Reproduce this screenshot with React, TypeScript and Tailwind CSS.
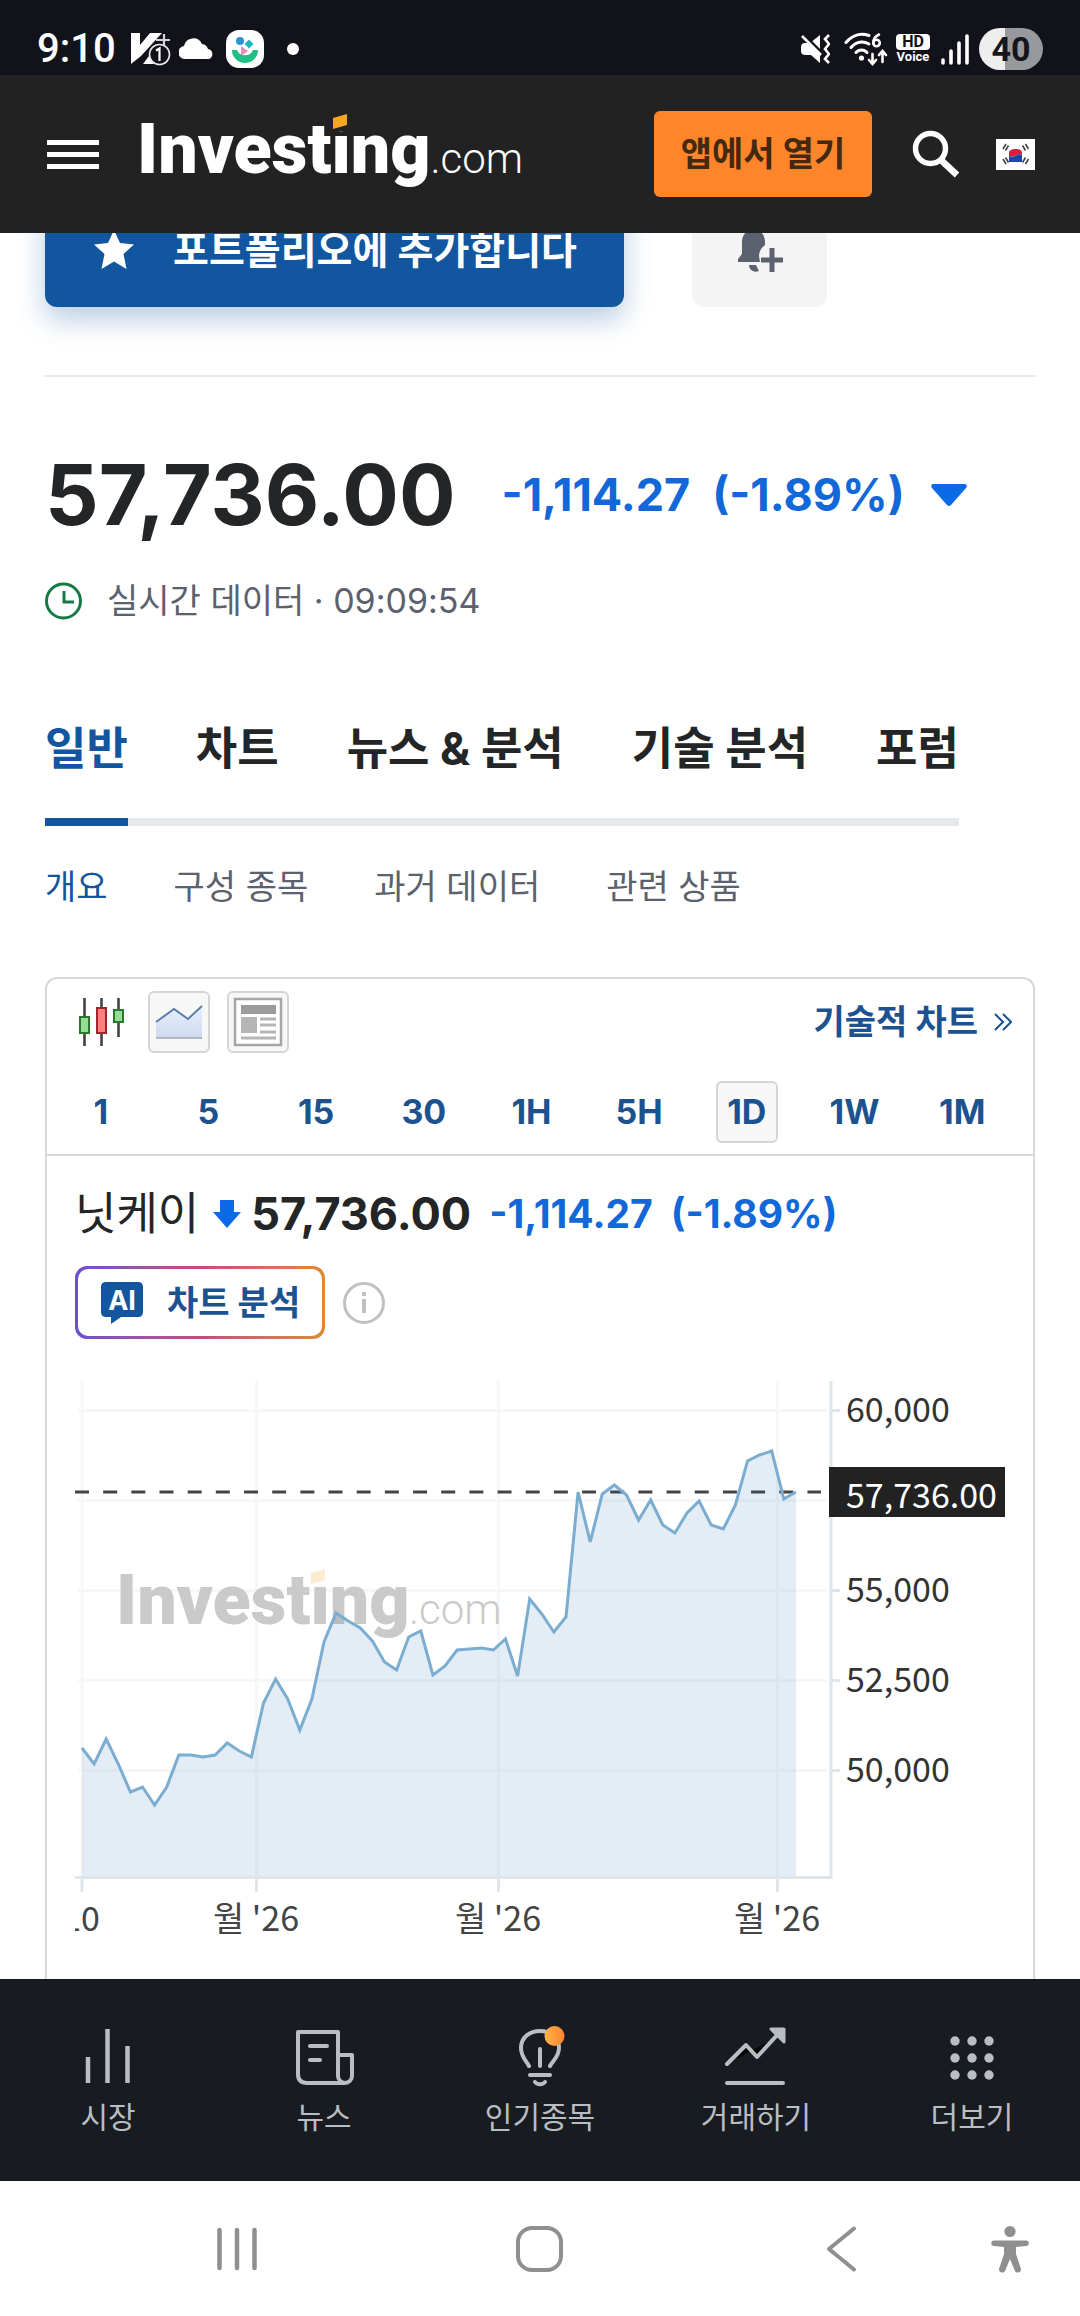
import React from "react";

const KR = "font-['Inter','Noto_Sans_CJK_KR',sans-serif]";

const timeframes = ["1", "5", "15", "30", "1H", "5H", "1D", "1W", "1M"];
const tabs = ["일반", "차트", "뉴스 & 분석", "기술 분석", "포럼"];
const subTabs = ["개요", "구성 종목", "과거 데이터", "관련 상품"];

/* Heights of the daily closes inside the plot area, one per trading day. */
const closes = [
  367, 383, 358, 383, 411, 406, 424, 406, 374, 374, 376, 374, 362, 370, 376, 322, 298, 318, 349, 318,
  261, 232, 240, 247, 260, 281, 289, 256, 250, 294, 285, 269, 268, 267, 269, 258, 295, 218, 233, 251,
  236, 111, 161, 113, 104, 114, 139, 119, 144, 152, 132, 120, 144, 148, 124, 80, 74, 70, 118, 111,
];
const STEP = 12.1;
const line = closes.map((y, i) => `${(7 + i * STEP).toFixed(1)},${y}`).join(" ");
const endX = (7 + (closes.length - 1) * STEP).toFixed(1);

function StatusBar() {
  return (
    <div className="flex h-[75px] items-center justify-between bg-[#12131a] pr-[37px] pl-[37px] pb-2.5 pt-8 font-['Roboto',sans-serif] text-white">
      <div className="flex items-center">
        <span className="w-[78px] text-[40px] leading-8 font-medium">9:10</span>
        <svg className="ml-4 h-9 w-10" viewBox="0 0 40 36" aria-hidden="true">
          <path d="M0 2h9v12L19 2h12L10 25l-10 8z" fill="#fff" />
          <path d="M12 33l9-12h7v12z" fill="#fff" />
          <path d="M25 9h14M33 3v12" stroke="#d4d4d8" strokeWidth="2.200" />
          <circle cx="28.500" cy="23.500" r="10" fill="#12131a" stroke="#e8e8ea" strokeWidth="1.600" />
          <path d="M25 19.500l3.500-2V30" fill="none" stroke="#fff" strokeWidth="2.200" />
        </svg>
        <svg className="ml-2 h-6 w-[36px]" viewBox="0 0 36 24" aria-hidden="true">
          <path d="M7 22a6.500 6.500 0 0 1-2-13A9.500 9.500 0 0 1 23 7a7 7 0 0 1 6 5 5.200 5.200 0 0 1 1 10z" fill="#fff" />
        </svg>
        <svg className="ml-2.5 h-10 w-10" viewBox="0 0 40 40" aria-hidden="true">
          <rect x="1" y="1" width="38" height="38" rx="13" fill="#fff" />
          <circle cx="15" cy="12" r="4" fill="#2a93d8" />
          <path d="M24 10.500l4.500 4.500-4.500 4.500-4.500-4.500z" fill="#1cb8bd" />
          <path d="M16 17l7 5-7 5z" fill="#e58fc0" />
          <path d="M7 21h5a8.500 8 0 0 0 16 0h5a13 13 0 0 1-26 0z" fill="#1fbf85" />
        </svg>
        <span className="ml-[22px] h-3 w-3 rounded-full bg-white" />
      </div>
      <div className="flex items-center">
        <svg className="h-8 w-[30px]" viewBox="0 0 30 32" aria-hidden="true">
          <path d="M20 2v28l-9-8H6c-3 0-5-1-5-4v-4c0-2 1-4 4-4h5z" fill="#fff" />
          <path d="M2 0l22 22" stroke="#12131a" strokeWidth="3" />
          <path d="M2 3l19 19" stroke="#fff" strokeWidth="2.500" />
          <path d="M29 2l-4 4 4 5-4 5 4 5-4 5 4 4" fill="none" stroke="#fff" strokeWidth="2.600" />
        </svg>
        <svg className="ml-3.5 h-[34px] w-[45px]" viewBox="0 0 45 34" aria-hidden="true">
          <g fill="none" stroke="#fff" strokeWidth="3" strokeLinecap="round">
            <path d="M2 10.500C9 2 18 1 25 3.500" />
            <path d="M7 15.500c5-6 12-7 18-3.500" />
            <path d="M12 20.500c3-3.500 8-3.500 11 0" />
            <path d="M28.500 22v9M25 28l3.500 4 3.500-4M38.500 30V20M35 23l3.500-4 3.500 4" strokeWidth="2.600" />
            <path d="M35 2.500c-4 2-6 5-5.500 8.500" strokeWidth="2.600" />
            <circle cx="32.500" cy="11" r="3.300" strokeWidth="2.600" />
          </g>
          <circle cx="17.500" cy="26" r="2.600" fill="#fff" />
        </svg>
        <div className="ml-1.5 flex w-9 flex-col items-center">
          <span className="flex h-4 w-[34px] items-center justify-center rounded-[4px] bg-white text-[16px] leading-4 font-bold text-[#12131a]">
            HD
          </span>
          <span className="text-[13px] leading-[14px] font-bold">Voice</span>
        </div>
        <svg className="ml-2.5 h-8 w-7" viewBox="0 0 28 32" aria-hidden="true">
          <path d="M2 27v3M10 18v12M18 10v20M26 3v27" stroke="#fff" strokeWidth="3.600" strokeLinecap="round" />
        </svg>
        <span className="ml-2.5 flex h-[42px] w-16 items-center justify-center rounded-full bg-linear-to-r from-[#eeeeee] from-40% to-[#98999c] to-40% text-[34px] leading-8 font-bold text-[#15161c]">
          40
        </span>
      </div>
    </div>
  );
}

function Header() {
  return (
    <header className="flex h-[158px] items-center bg-[#222222] pr-[45px] pl-[47px]">
      <button type="button" aria-label="메뉴" className="flex w-[52px] flex-col gap-[7px]">
        <span className="h-[5px] w-full bg-white" />
        <span className="h-[5px] w-full bg-white" />
        <span className="h-[5px] w-full bg-white" />
      </button>
      <a href="#" aria-label="Investing.com" className="relative ml-[38px] block font-['Roboto',sans-serif] whitespace-nowrap text-white">
        <span className="text-[70px] leading-[74px] font-black">Investing</span>
        <span className="text-[42px] leading-[74px] font-light">.com</span>
        <svg className="absolute top-0 left-[194px] h-5 w-[18px]" viewBox="0 0 18 20" aria-hidden="true">
          <path d="M0 0h18v19H0z" fill="#222222" />
          <path d="M2 6l14-4v11L2 17z" fill="#f5a623" />
        </svg>
      </a>
      <button type="button" className="ml-auto h-[86px] w-[218px] rounded-md bg-[#ff852b] text-[34px] leading-10 font-bold text-[#43290f]">
        앱에서 열기
      </button>
      <button type="button" aria-label="검색" className="ml-10">
        <svg className="h-12 w-12" viewBox="0 0 48 48" aria-hidden="true">
          <circle cx="18.500" cy="18.500" r="15" fill="none" stroke="#fff" strokeWidth="5.500" />
          <path d="M30 31l15 14" stroke="#fff" strokeWidth="6.500" />
        </svg>
      </button>
      <button type="button" aria-label="한국어" className="ml-9">
        <svg className="h-[31px] w-[39px]" viewBox="0 0 39 31" aria-hidden="true">
          <rect width="39" height="31" fill="#fff" />
          <path d="M13 17v-3c0-3 3-4 6.500-4s6.500 1 6.500 4v2c-3-2-5 0-7 1s-4 1-6 0z" fill="#d3213c" />
          <path d="M13 17c2 1 4 1 6 0s4-3 7-1v7H13z" fill="#1a46a8" />
          <path d="M7 10l3-5M9.500 11.500l3-5M26.500 6.500l3 5M29.500 5l3 5M7 20l3 5M9.500 18.500l3 5M26.500 23.500l3-5M29.500 25l3-5" stroke="#444" strokeWidth="1.600" />
        </svg>
      </button>
    </header>
  );
}

function Actions() {
  return (
    <div className="-mt-10 flex gap-[68px] border-b-2 border-[#e6e9eb] pb-[68px]">
      <button type="button" className="flex h-[114px] w-[579px] items-center rounded-xl bg-[#1256a0] pl-12 text-[39px] leading-[46px] font-bold text-white shadow-[0_12px_28px_rgba(18,86,160,0.3)]">
        <svg className="h-[42px] w-[42px]" viewBox="0 0 42 42" aria-hidden="true">
          <path d="M21 1l6 13 14 1.500-10.500 9.500L33.500 40 21 32.500 8.500 40l3-15L1 15.500 15 14z" fill="#fff" />
        </svg>
        <span className="ml-[38px]">포트폴리오에 추가합니다</span>
      </button>
      <button type="button" aria-label="알림 추가" className="flex h-[114px] w-[135px] items-center justify-center rounded-xl bg-[#f4f4f4]">
        <svg className="h-12 w-12" viewBox="0 0 48 48" aria-hidden="true">
          <path d="M18 1a3 3 0 0 1 3 3c5 1.500 8 6 8 12v3c-4 3-6 7-6 11l1 6H2v-3l4-5V16C6 10 9 5.500 15 4a3 3 0 0 1 3-3z" fill="#5b616e" />
          <path d="M13 39h7l3 6c-5 2-10-1-10-6z" fill="#5b616e" />
          <path d="M36 22v24M25 34h22" stroke="#5b616e" strokeWidth="5" />
        </svg>
      </button>
    </div>
  );
}

function Quote() {
  return (
    <section className="pt-[58px]">
      <div className="flex items-center">
        <span className="text-[84px] leading-[120px] font-bold text-[#232526]">57,736.00</span>
        <span className="ml-[46px] text-[45px] leading-[54px] font-bold text-[#1268d8]">-1,114.27</span>
        <span className="ml-[22px] text-[45px] leading-[54px] font-bold text-[#1268d8]">(-1.89%)</span>
        <svg className="ml-[26px] h-[22px] w-9" viewBox="0 0 36 22" aria-hidden="true">
          <path d="M2 0h32q3 1 1 4L20 21q-2 2-4 0L1 4Q-1 1 2 0z" fill="#0b6ae6" />
        </svg>
      </div>
      <div className="mt-[21px] flex items-center text-[34px] leading-[50px] text-[#5b616e]">
        <svg className="h-[38px] w-[38px]" viewBox="0 0 38 38" fill="none" stroke="#177a45" strokeWidth="3" aria-hidden="true">
          <circle cx="18.500" cy="19" r="17" />
          <path d="M19 9v11h10" />
        </svg>
        <span className="ml-6">실시간 데이터 · 09:09:54</span>
      </div>
    </section>
  );
}

function Tabs() {
  return (
    <>
      <nav className="mt-[90px] flex">
        <div className="flex gap-[68px] border-b-8 border-[#e5e8ec]">
          {tabs.map((t, i) => (
            <a
              key={t}
              href="#"
              className={
                i === 0
                  ? "-mb-2 border-b-8 border-[#1256a0] pb-9 text-[45px] leading-[66px] font-bold whitespace-nowrap text-[#1256a0]"
                  : "pb-9 text-[45px] leading-[66px] font-bold whitespace-nowrap text-[#232526]"
              }
            >
              {t}
            </a>
          ))}
        </div>
      </nav>
      <nav className="mt-9 flex gap-[66px] text-[34px] leading-[50px]">
        {subTabs.map((t, i) => (
          <a key={t} href="#" className={i === 0 ? "text-[#1256a0]" : "text-[#5b616e]"}>
            {t}
          </a>
        ))}
      </nav>
    </>
  );
}

function Toolbar() {
  return (
    <div className="border-b-2 border-[#d8d9da] pt-3">
      <div className="flex items-center pr-[21px] pl-7">
        <button type="button" aria-label="캔들 차트" className="flex h-[62px] w-[54px] items-center">
          <svg className="h-12 w-[50px]" viewBox="0 0 50 48" aria-hidden="true">
            <path d="M9.500 0v48M26.500 0v48M43.500 0v39" stroke="#444" strokeWidth="2.600" />
            <rect x="5" y="19" width="9" height="16" fill="#9bdc94" stroke="#277a2c" strokeWidth="2" />
            <rect x="22" y="10" width="9" height="25" fill="#ff7d7d" stroke="#a3232a" strokeWidth="2" />
            <rect x="39" y="12" width="9" height="12" fill="#9bdc94" stroke="#277a2c" strokeWidth="2" />
          </svg>
        </button>
        <button type="button" aria-label="영역 차트" className="ml-[19px] flex h-[62px] w-[62px] items-center justify-center rounded-md border-2 border-[#d5d5d5] bg-[#f7f7f7]">
          <svg className="h-9 w-12" viewBox="0 0 48 36" aria-hidden="true">
            <defs>
              <linearGradient id="area-icon" x1="0" y1="0" x2="0" y2="1">
                <stop offset="0" stopColor="#e9effb" />
                <stop offset="1" stopColor="#cfdaf2" />
              </linearGradient>
            </defs>
            <path d="M1 18L19 5l14 10L47 2v31H1z" fill="url(#area-icon)" />
            <path d="M1 18L19 5l14 10L47 2" fill="none" stroke="#5c7fa8" strokeWidth="2" />
            <path d="M1 34h46" stroke="#b5b8be" strokeWidth="2" />
          </svg>
        </button>
        <button type="button" aria-label="뉴스 표시" className="ml-[17px] flex h-[62px] w-[62px] items-center justify-center rounded-md border-2 border-[#d5d5d5] bg-[#f7f7f7]">
          <svg className="h-[50px] w-[50px]" viewBox="0 0 50 50" aria-hidden="true">
            <rect x="2" y="2" width="46" height="46" fill="#fff" stroke="#a6a6a6" strokeWidth="2.500" />
            <rect x="8" y="8" width="35" height="9" fill="#9b9b9b" />
            <rect x="8" y="20" width="16" height="16" fill="#b5b5b5" />
            <path d="M27 22h16M27 28h16M27 35h16M8 41h35" stroke="#b5b5b5" strokeWidth="3" />
          </svg>
        </button>
        <a href="#" className="ml-auto flex items-center text-[34px] leading-[50px] font-bold text-[#1c528f]">
          기술적 차트
          <svg className="ml-4 h-[18px] w-[18px]" viewBox="0 0 18 18" fill="none" stroke="#1c528f" strokeWidth="2" aria-hidden="true">
            <path d="M1 1l8 8-8 8M9 1l8 8-8 8" />
          </svg>
        </a>
      </div>
      <div className="mt-7 mr-[17px] grid grid-cols-9 justify-items-center pb-[11px]">
        {timeframes.map((t) => (
          <button
            key={t}
            type="button"
            className={
              t === "1D"
                ? "h-[62px] w-[62px] rounded-md border-2 border-[#d5d5d5] bg-[#f7f7f7] text-[34px] leading-[44px] font-bold text-[#1c528f]"
                : "h-[62px] w-[62px] text-[34px] leading-[44px] font-bold whitespace-nowrap text-[#1c528f]"
            }
          >
            {t}
          </button>
        ))}
      </div>
    </div>
  );
}

function PriceChart() {
  return (
    <svg
      className="mt-[42px] block h-auto w-full font-['Noto_Sans_CJK_KR',sans-serif] text-[34px]"
      viewBox="0 0 930 598"
      role="img"
      aria-label="닛케이 차트"
    >
      <g stroke="#f6f7f8" strokeWidth="3">
        <path d="M7 0v496M181.500 0v496M423.500 0v496M702.500 0v496" />
        <path d="M3 29.500h749M3 119.500h749M3 209.500h749M3 299.500h749M3 389.500h749" />
      </g>
      <path d="M0 111h746" stroke="#444" strokeWidth="3" strokeDasharray="14 14.170" />
      <g fill="#cacaca" className="font-['Roboto',sans-serif]">
        <text x="41" y="243" fontSize="70" fontWeight="900">
          Investing
        </text>
        <text x="334" y="243" fontSize="42" fontWeight="300">
          .com
        </text>
      </g>
      <path d="M234 187h18v17h-18z" fill="#fff" />
      <path d="M236 192l14-4v11l-14 4z" fill="#fdebcf" />
      <polygon points={`7,496 ${line} ${endX},496`} fill="#1f6faf" fillOpacity="0.12" />
      <polyline points={line} fill="none" stroke="#7aadcf" strokeWidth="3" />
      <g stroke="#e0e5e9" strokeWidth="3" fill="none">
        <path d="M0 496.500h757M756 0v498M7 497v14M181.500 497v14M423.500 497v14M702.500 497v14" />
        <path d="M756 29.500h9M756 209.500h9M756 299.500h9M756 389.500h9" />
      </g>
      <g fill="#333">
        <text x="771" y="41">60,000</text>
        <text x="771" y="221">55,000</text>
        <text x="771" y="311">52,500</text>
        <text x="771" y="401">50,000</text>
      </g>
      <rect x="754" y="86" width="176" height="50" fill="#222" />
      <text x="771" y="127" fill="#fff">
        57,736.00
      </text>
      <g fill="#444" textAnchor="middle">
        <text x="6" y="550">10</text>
        <text x="181" y="550">월 '26</text>
        <text x="423" y="550">월 '26</text>
        <text x="702" y="550">월 '26</text>
      </g>
    </svg>
  );
}

function ChartCard() {
  return (
    <section className="mt-[65px] rounded-t-xl border-2 border-b-0 border-[#d8d9da]">
      <Toolbar />
      <div className="px-7 pt-[25px]">
        <h2 className="flex items-center leading-[66px]">
          <span className="text-[45px] font-normal text-[#232526]">닛케이</span>
          <svg className="ml-3.5 h-7 w-7" viewBox="0 0 28 28" aria-hidden="true">
            <path d="M7 0h14v12h7L14 28 0 12h7z" fill="#0b6ae6" />
          </svg>
          <span className="ml-2.5 text-[45px] font-bold text-[#232526]">57,736.00</span>
          <span className="ml-[18px] text-[39px] font-bold text-[#1268d8]">-1,114.27</span>
          <span className="ml-[18px] text-[39px] font-bold text-[#1268d8]">(-1.89%)</span>
        </h2>
        <div className="mt-[19px] flex items-center">
          <button type="button" className="h-[73px] w-[250px] rounded-xl bg-linear-to-r from-[#6a4fd0] via-[#c8487c] to-[#dd8a35] p-[3px]">
            <span className="flex h-full items-center rounded-[10px] bg-white pl-[23px] text-[34px] leading-[50px] font-bold text-[#1c528f]">
              <svg className="h-[42px] w-[42px]" viewBox="0 0 42 42" aria-hidden="true">
                <path d="M5 0h32q5 0 5 5v25q0 5-5 5H20l-10 7v-7H5q-5 0-5-5V5q0-5 5-5z" fill="#1256a0" />
                <text x="21" y="28" textAnchor="middle" fontSize="27" fontWeight="700" fill="#fff">
                  AI
                </text>
              </svg>
              <span className="ml-6">차트 분석</span>
            </span>
          </button>
          <button type="button" aria-label="정보" className="ml-[18px]">
            <svg className="h-[42px] w-[42px]" viewBox="0 0 42 42" fill="none" stroke="#bfc0c2" strokeWidth="3" aria-hidden="true">
              <circle cx="21" cy="21" r="19.500" />
              <path d="M21 17v14M21 10v4" strokeWidth="4" />
            </svg>
          </button>
        </div>
        <PriceChart />
      </div>
    </section>
  );
}

function Stroke({ children }: { children: React.ReactNode }) {
  return (
    <svg className="h-16 w-16" viewBox="0 0 64 64" fill="none" stroke="#b9bec4" strokeWidth="4" strokeLinecap="round" strokeLinejoin="round" aria-hidden="true">
      {children}
    </svg>
  );
}

const navItems = [
  {
    label: "시장",
    icon: (
      <Stroke>
        <path d="M12 32v26M31.500 4v54M51.500 21v37" strokeWidth="4.500" strokeLinecap="butt" />
      </Stroke>
    ),
  },
  {
    label: "뉴스",
    icon: (
      <Stroke>
        <path d="M6 7h40v44a7 7 0 0 0 14 0V30H46M6 7v42q0 9 9 9h38M18 21h17M18 35h10" />
      </Stroke>
    ),
  },
  {
    label: "인기종목",
    icon: (
      <Stroke>
        <path d="M21 41c-3-6-8-9-8-18C13 12 22 6 32 6s19 6 19 17c0 9-6 12-9 18M32 24v17M22 50h20M27 57c2 3 8 3 10 0" />
        <defs>
          <linearGradient id="badge">
            <stop offset="0" stopColor="#ffb347" />
            <stop offset="1" stopColor="#ff8432" />
          </linearGradient>
        </defs>
        <circle cx="46.500" cy="11" r="10" fill="url(#badge)" stroke="none" />
      </Stroke>
    ),
  },
  {
    label: "거래하기",
    icon: (
      <Stroke>
        <path d="M12 34l10-15 10 11 20-17z" fill="#000" stroke="none" />
        <path d="M3 39l19-19 11 12L56 7M3 58h56" />
        <path d="M47 4h13v13z" fill="#b9bec4" strokeWidth="3" />
      </Stroke>
    ),
  },
  {
    label: "더보기",
    icon: (
      <Stroke>
        <g fill="#b9bec4" stroke="none">
          {[16, 33, 50].map((cy) => [15, 32, 49].map((cx) => <circle key={`${cx}-${cy}`} cx={cx} cy={cy} r="4.700" />))}
        </g>
      </Stroke>
    ),
  },
];

function BottomNav() {
  return (
    <nav className="relative grid h-[202px] grid-cols-5 bg-[#181b20] pt-[46px]">
      {navItems.map((n) => (
        <a key={n.label} href="#" className="flex flex-col items-center gap-1.5 text-[30px] leading-[44px] text-[#b9bec4]">
          {n.icon}
          <span>{n.label}</span>
        </a>
      ))}
    </nav>
  );
}

function SystemNav() {
  return (
    <div className="flex h-[135px] items-center bg-white pl-[86px]">
      <button type="button" aria-label="최근 앱" className="flex flex-1 justify-center">
        <svg className="h-12 w-12" viewBox="0 0 48 48" stroke="#8f8f8f" strokeWidth="4.500" strokeLinecap="round" aria-hidden="true">
          <path d="M6.500 5v38M24 5v38M41.500 5v38" />
        </svg>
      </button>
      <button type="button" aria-label="홈" className="flex flex-1 justify-center">
        <svg className="h-12 w-12" viewBox="0 0 48 48" fill="none" stroke="#8f8f8f" strokeWidth="4" aria-hidden="true">
          <rect x="3" y="3" width="43" height="42" rx="14" />
        </svg>
      </button>
      <button type="button" aria-label="뒤로" className="flex flex-1 justify-center">
        <svg className="h-12 w-12" viewBox="0 0 48 48" fill="none" stroke="#8f8f8f" strokeWidth="4" strokeLinecap="round" strokeLinejoin="round" aria-hidden="true">
          <path d="M38 3.500L13 24l25 20.500" />
        </svg>
      </button>
      <button type="button" aria-label="접근성" className="w-[89px]">
        <svg className="h-12 w-[38px]" viewBox="0 0 38 48" aria-hidden="true">
          <circle cx="19" cy="6.500" r="5.600" fill="#8f8f8f" />
          <path d="M3 15.500h32a2.700 2.700 0 0 1 0 5.500l-10 1v7l5 15q0 3-2.500 3.500T24 46l-5-12-5 12q-1 2-3.500 1.500T8 44l5-15v-7L3 21a2.700 2.700 0 0 1 0-5.500z" fill="#8f8f8f" />
        </svg>
      </button>
    </div>
  );
}

export default function App() {
  return (
    <div className={`flex flex-col overflow-hidden bg-white ${KR}`}>
      <div className="relative z-10">
        <StatusBar />
        <Header />
      </div>
      <main className="px-[45px]">
        <Actions />
        <Quote />
        <Tabs />
        <ChartCard />
      </main>
      <BottomNav />
      <SystemNav />
    </div>
  );
}
